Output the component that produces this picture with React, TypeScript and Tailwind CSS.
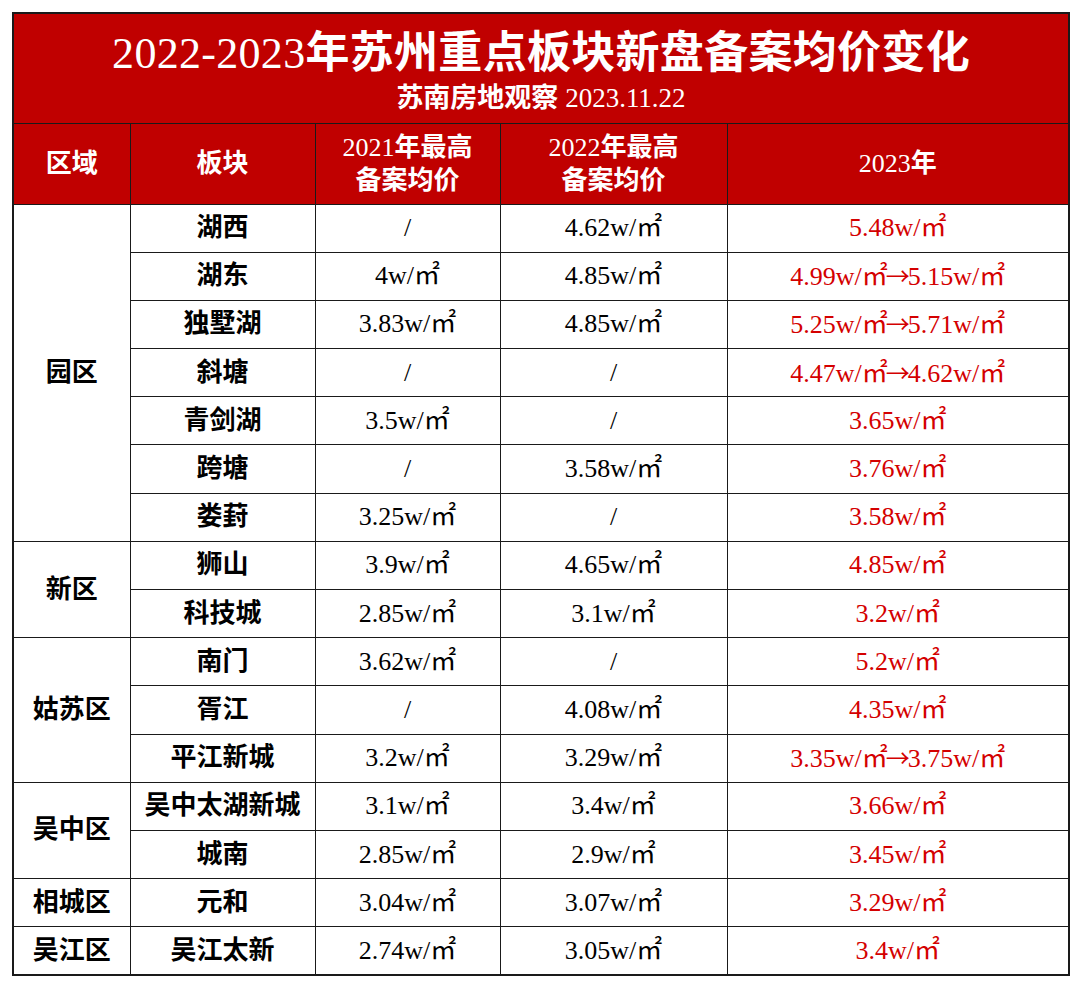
import React from "react";

type Row = {
  area?: string;
  span?: number;
  name: string;
  y21: string;
  y22: string;
  y23: string;
};

const rows: Row[] = [
  { area: "园区", span: 7, name: "湖西", y21: "/", y22: "4.62w/㎡", y23: "5.48w/㎡" },
  { name: "湖东", y21: "4w/㎡", y22: "4.85w/㎡", y23: "4.99w/㎡→5.15w/㎡" },
  { name: "独墅湖", y21: "3.83w/㎡", y22: "4.85w/㎡", y23: "5.25w/㎡→5.71w/㎡" },
  { name: "斜塘", y21: "/", y22: "/", y23: "4.47w/㎡→4.62w/㎡" },
  { name: "青剑湖", y21: "3.5w/㎡", y22: "/", y23: "3.65w/㎡" },
  { name: "跨塘", y21: "/", y22: "3.58w/㎡", y23: "3.76w/㎡" },
  { name: "娄葑", y21: "3.25w/㎡", y22: "/", y23: "3.58w/㎡" },
  { area: "新区", span: 2, name: "狮山", y21: "3.9w/㎡", y22: "4.65w/㎡", y23: "4.85w/㎡" },
  { name: "科技城", y21: "2.85w/㎡", y22: "3.1w/㎡", y23: "3.2w/㎡" },
  { area: "姑苏区", span: 3, name: "南门", y21: "3.62w/㎡", y22: "/", y23: "5.2w/㎡" },
  { name: "胥江", y21: "/", y22: "4.08w/㎡", y23: "4.35w/㎡" },
  { name: "平江新城", y21: "3.2w/㎡", y22: "3.29w/㎡", y23: "3.35w/㎡→3.75w/㎡" },
  { area: "吴中区", span: 2, name: "吴中太湖新城", y21: "3.1w/㎡", y22: "3.4w/㎡", y23: "3.66w/㎡" },
  { name: "城南", y21: "2.85w/㎡", y22: "2.9w/㎡", y23: "3.45w/㎡" },
  { area: "相城区", span: 1, name: "元和", y21: "3.04w/㎡", y22: "3.07w/㎡", y23: "3.29w/㎡" },
  { area: "吴江区", span: 1, name: "吴江太新", y21: "2.74w/㎡", y22: "3.05w/㎡", y23: "3.4w/㎡" },
];

const cell = "border border-[#1a1a1a] text-center align-middle h-[48.2px] p-0";

// header label: latin part regular, CJK part bold
function Head({ latin, cjk }: { latin?: string; cjk: string }) {
  return (
    <span>
      {latin && <span className="font-normal">{latin}</span>}
      <span className="font-bold">{cjk}</span>
    </span>
  );
}

// "a→b" price change, arrow drawn with the CJK font so it sits mid-height
function Price({ value }: { value: string }) {
  const parts = value.split("→");
  if (parts.length === 1) return <>{value}</>;
  return (
    <>
      {parts[0]}
      <span className="font-['Noto_Sans_CJK_SC'] mx-[-2px] text-[24px]">→</span>
      {parts[1]}
    </>
  );
}

export default function App() {
  return (
    <div className="w-[1080px] h-[986px] bg-white pt-[12px] pl-[12px] font-['Liberation_Serif','Noto_Sans_CJK_SC',serif]">
      <table className="table-fixed w-[1056px] border-collapse border-2 border-[#1a1a1a]">
        <colgroup>
          <col className="w-[117px]" />
          <col className="w-[185px]" />
          <col className="w-[185px]" />
          <col className="w-[227px]" />
          <col className="w-[342px]" />
        </colgroup>
        <thead>
          <tr>
            <th colSpan={5} className="border border-[#1a1a1a] bg-[#c00000] text-white h-[110px] p-0 align-top">
              <div className="flex flex-col items-center pt-[16px]">
                <div className="text-[44px] leading-[48px] tracking-[0.3px]">
                  <Head latin="2022-2023" cjk="年苏州重点板块新盘备案均价变化" />
                </div>
                <div className="text-[27px] leading-[32px] mt-[4px]">
                  <span className="font-bold">苏南房地观察</span>
                  <span className="font-normal"> 2023.11.22</span>
                </div>
              </div>
            </th>
          </tr>
          <tr className="bg-[#c00000] text-white text-[26px] leading-[33px]">
            <th className="border border-[#1a1a1a] h-[81px] p-0">
              <Head cjk="区域" />
            </th>
            <th className="border border-[#1a1a1a] p-0">
              <Head cjk="板块" />
            </th>
            <th className="border border-[#1a1a1a] p-0">
              <Head latin="2021" cjk="年最高" />
              <br />
              <Head cjk="备案均价" />
            </th>
            <th className="border border-[#1a1a1a] p-0">
              <Head latin="2022" cjk="年最高" />
              <br />
              <Head cjk="备案均价" />
            </th>
            <th className="border border-[#1a1a1a] p-0">
              <Head latin="2023" cjk="年" />
            </th>
          </tr>
        </thead>
        <tbody className="text-[26px] leading-[30px] text-black">
          {rows.map((r) => (
            <tr key={r.name}>
              {r.area && (
                <td rowSpan={r.span} className={cell + " font-bold"}>
                  {r.area}
                </td>
              )}
              <td className={cell + " font-bold"}>{r.name}</td>
              <td className={cell}>{r.y21}</td>
              <td className={cell}>{r.y22}</td>
              <td className={cell + " text-[#d40000]"}>
                <Price value={r.y23} />
              </td>
            </tr>
          ))}
        </tbody>
      </table>
    </div>
  );
}
